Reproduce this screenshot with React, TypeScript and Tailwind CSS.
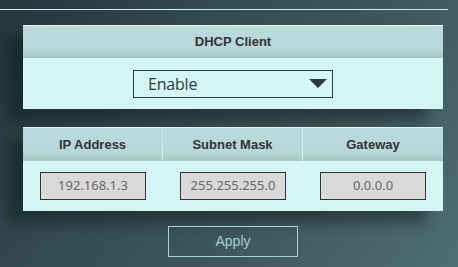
const headerCell =
  'flex items-center justify-center text-[13px] font-bold text-[#333]';

const ipFields = [
  { label: 'IP Address', value: '192.168.1.3' },
  { label: 'Subnet Mask', value: '255.255.255.0' },
  { label: 'Gateway', value: '0.0.0.0' },
];

export default function App() {
  return (
    <div className="w-[458px] h-[267px] overflow-hidden bg-[linear-gradient(125deg,#22363c_0%,#334a50_35%,#3f585e_65%,#4f6d72_100%)] font-['Liberation_Sans',Arial,sans-serif]">
      <div className="pt-[9px]">
        <div className="w-[448px] h-px bg-[#cdeef0]" />
      </div>

      {/* DHCP Client */}
      <div className="mt-[15px] ml-[23px] w-[420px] shadow-[-16px_12px_12px_rgba(10,25,30,0.45)]">
        <div className={`h-[33px] border-t border-[#e4f4f4] bg-[linear-gradient(#badadd_0%,#b7d7da_75%,#a4c4c6_100%)] ${headerCell}`}>
          DHCP Client
        </div>
        <div className="h-[51px] bg-[#d4f4f6] flex items-center justify-center">
          <div className="w-[200px] h-[28px] border border-[#2b3b3f] flex items-center justify-between pl-[14px] pr-[5px] font-['Open_Sans','Noto_Sans',sans-serif] text-[16px] text-[#2b3b3f]">
            <span className="-tracking-[0.2px]">Enable</span>
            <svg width="18" height="9" viewBox="0 0 18 9">
              <path d="M0 0h18L9 9z" fill="#2b3b3f" />
            </svg>
          </div>
        </div>
      </div>

      {/* Static addresses */}
      <div className="mt-[18px] ml-[23px] w-[420px] shadow-[-16px_12px_12px_rgba(10,25,30,0.45)]">
        <div className="h-[34px] grid grid-cols-[140px_140px_140px] border-t border-[#e4f4f4] bg-[linear-gradient(#badadd_0%,#b7d7da_75%,#a4c4c6_100%)]">
          {ipFields.map((f, i) => (
            <div
              key={f.label}
              className={`${headerCell} ${i < 2 ? 'border-r border-[#d2ecee]' : ''}`}
            >
              {f.label}
            </div>
          ))}
        </div>
        <div className="h-[50px] bg-[#d4f4f6] grid grid-cols-[140px_140px_140px] items-center">
          {ipFields.map((f) => (
            <div key={f.label} className="flex justify-center">
              <div className="w-[106px] h-[28px] border border-[#333] bg-[#d9d9d9] flex items-center justify-center font-['Noto_Sans',sans-serif] text-[13px] text-[#666]">
                {f.value}
              </div>
            </div>
          ))}
        </div>
      </div>

      <div className="mt-[15px] flex">
        <button className="ml-[168px] w-[130px] h-[31px] border border-[#a6d4d4] text-[14px] text-[#a6cfd0] font-['Liberation_Sans',Arial,sans-serif]">
          Apply
        </button>
      </div>
    </div>
  );
}
